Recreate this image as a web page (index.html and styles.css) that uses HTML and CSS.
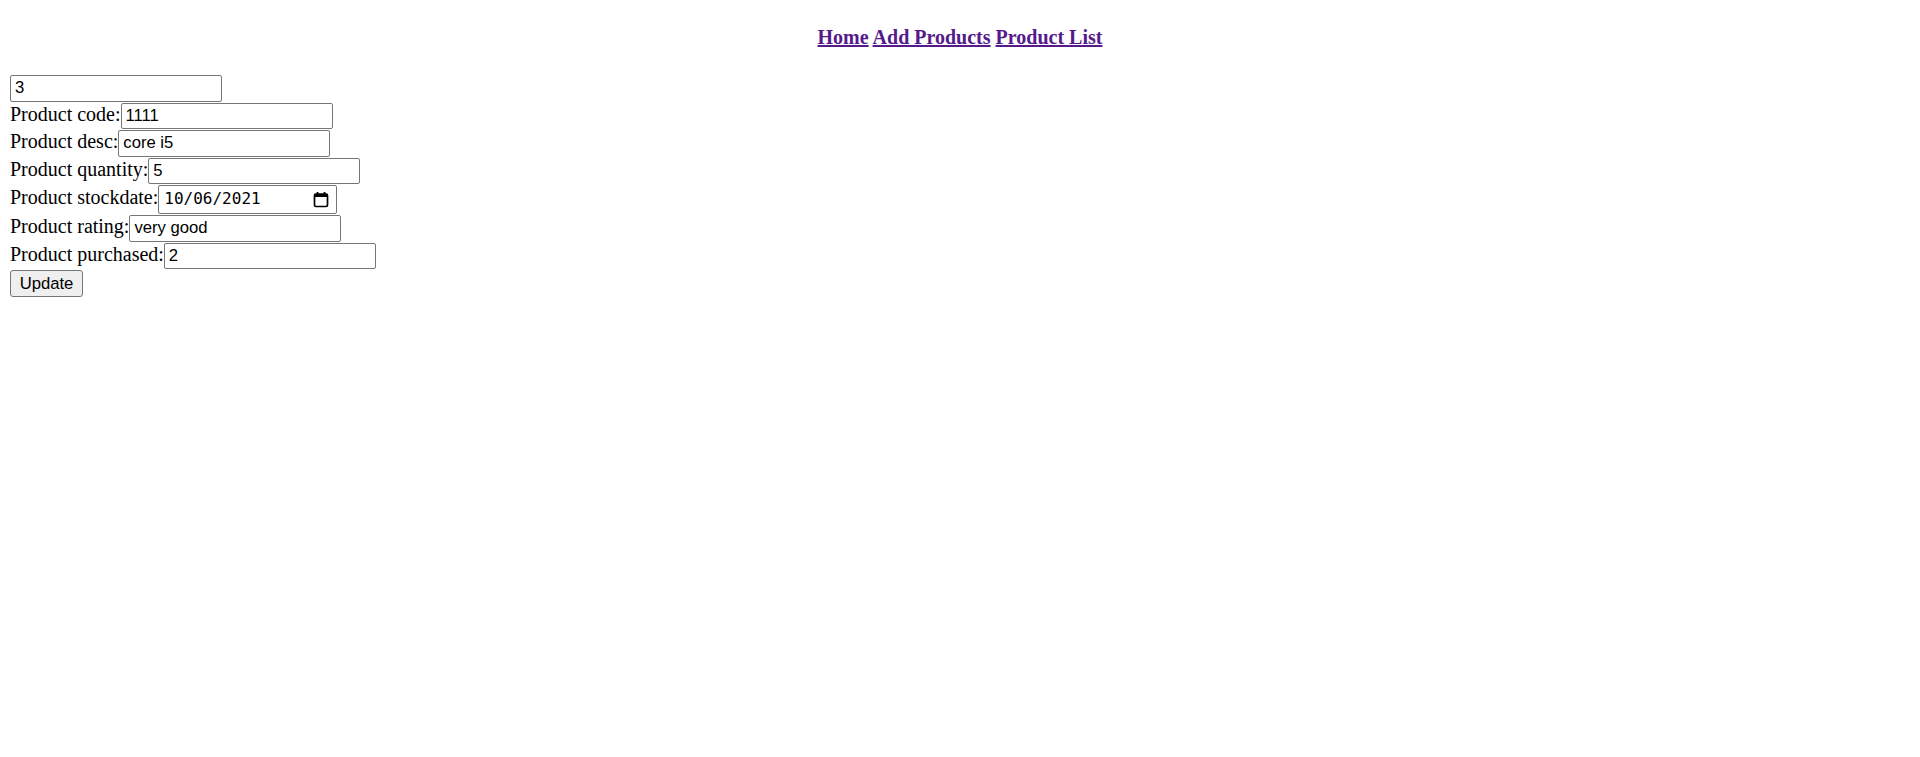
FILE: index.html
```html
<!DOCTYPE html>
<html lang="en">
<head>
<meta charset="utf-8">
<title>Update Product</title>
<link rel="stylesheet" href="styles.css">
</head>
<body>
<nav class="nav">
  <a href="#" class="nav-link">Home</a>
  <a href="#" class="nav-link">Add Products</a>
  <a href="#" class="nav-link">Product List</a>
</nav>
<form class="product-form">
  <div class="row"><input class="field" type="text" value="3"></div>
  <div class="row"><label class="label">Product code:</label><input class="field" type="text" value="1111"></div>
  <div class="row"><label class="label">Product desc:</label><input class="field" type="text" value="core i5"></div>
  <div class="row"><label class="label">Product quantity:</label><input class="field" type="text" value="5"></div>
  <div class="row row-date"><label class="label">Product stockdate:</label><span class="field date-field"><span class="date-text">10/06/2021</span><svg class="cal-icon" width="16" height="17" viewBox="0 0 16 17"><rect x="1.5" y="3" width="13" height="12.5" rx="1.5" fill="none" stroke="#000" stroke-width="1.7"/><rect x="1.5" y="3" width="13" height="3" fill="#000"/><rect x="3.6" y="1" width="1.8" height="3" fill="#000"/><rect x="10.6" y="1" width="1.8" height="3" fill="#000"/></svg></span></div>
  <div class="row"><label class="label">Product rating:</label><input class="field" type="text" value="very good"></div>
  <div class="row"><label class="label">Product purchased:</label><input class="field" type="text" value="2"></div>
  <div class="row"><button class="btn" type="button">Update</button></div>
</form>
</body>
</html>
```
FILE: styles.css
```css
html, body {
  background: #fff;
}
body {
  margin: 0;
  padding: 0 10px;
  font-family: "Liberation Serif", "Times New Roman", serif;
  font-size: 20px;
  color: #000;
}
.nav {
  display: block;
  text-align: center;
  font-size: 20px;
  line-height: 23px;
  font-weight: bold;
  padding-top: 25.5px;
  margin-bottom: 26.5px;
}
.nav-link {
  color: #551a8b;
  text-decoration: underline;
}
.product-form {
  margin: 0;
}
.row {
  display: flex;
  align-items: baseline;
  height: 27.5px;
}
.row-date {
  height: 30px;
}
.label {
  line-height: 23px;
  white-space: nowrap;
}
.field {
  box-sizing: border-box;
  width: 212px;
  height: 26.5px;
  border: 1px solid #767676;
  border-radius: 2px;
  padding: 0 4px;
  font-family: "Liberation Sans", Arial, sans-serif;
  font-size: 16.67px;
  color: #000;
  background: #fff;
  margin: 0;
  flex: none;
}
.date-field {
  display: flex;
  align-items: center;
  justify-content: space-between;
  width: 179px;
  height: 28.5px;
  padding: 0 7px 0 5px;
}
.date-text {
  font-family: "DejaVu Sans Mono", monospace;
  font-size: 16px;
  line-height: 1;
}
.cal-icon {
  display: block;
}
.btn {
  box-sizing: border-box;
  width: 73px;
  height: 27px;
  padding: 0;
  font-family: "Liberation Sans", Arial, sans-serif;
  font-size: 16.67px;
  color: #000;
  background: #efefef;
  border: 1px solid #767676;
  border-radius: 3px;
  margin: 0;
  flex: none;
}
```
